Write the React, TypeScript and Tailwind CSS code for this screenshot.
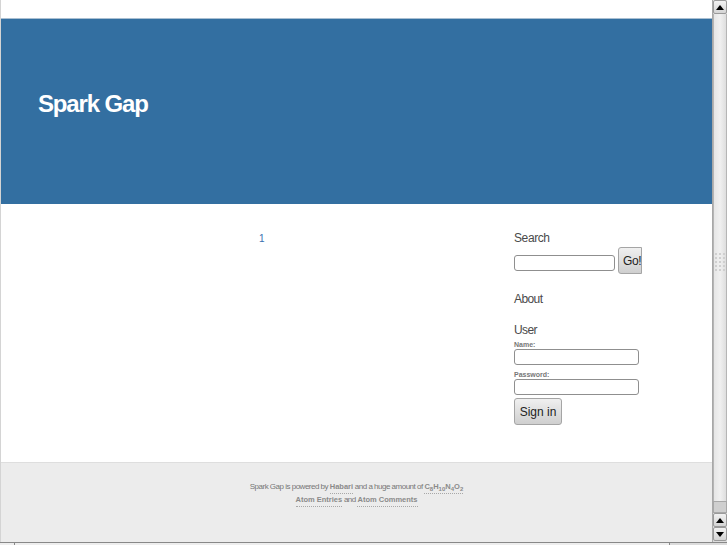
import React from "react";

const font = { fontFamily: '"Liberation Sans", Arial, sans-serif' };

const Field = () => (
  <input className="block w-[125px] h-[16px] bg-white border border-[#8f8f8f] rounded-[3px]" />
);

const ArrowButton = ({ up }: { up: boolean }) => (
  <div className="w-[14px] h-[14px] bg-gradient-to-b from-[#f2f2f2] to-[#d4d4d4] border border-[#9a9a9a] rounded-[2px] flex items-center justify-center">
    <div
      className={`w-0 h-0 border-l-[4px] border-r-[4px] border-l-transparent border-r-transparent ${
        up ? "border-b-[5px] border-b-black" : "border-t-[5px] border-t-black"
      }`}
    />
  </div>
);

const Scrollbar = () => (
  <div className="w-[15px] shrink-0 flex flex-col items-center bg-[#dcdcdc] border-l border-[#a8a8a8]">
    <ArrowButton up />
    <div className="flex-1 w-[14px] flex flex-col items-center justify-center pt-[8px] bg-gradient-to-r from-[#e6e6e6] via-[#f0f0f0] to-[#dedede] border-x border-[#b5b5b5]">
      <div className="grid grid-cols-3 gap-x-[2px] gap-y-[2px]">
        {Array.from({ length: 15 }).map((_, i) => (
          <div key={i} className="w-[2px] h-[2px] bg-[#cfcfcf]" />
        ))}
      </div>
    </div>
    <div className="h-[12px] w-[14px] bg-[#cfcfcf] border border-[#a8a8a8]" />
    <ArrowButton up />
    <ArrowButton up={false} />
    <div className="h-[1px]" />
  </div>
);

const FooterLink = ({ children }: { children: React.ReactNode }) => (
  <span className="font-bold text-[7.5px] text-[#8a8a8a] tracking-[0px] border-b border-dotted border-[#a8a8a8] pb-[2px]">
    {children}
  </span>
);

const Sub = ({ children }: { children: React.ReactNode }) => (
  <sub className="text-[6px]">{children}</sub>
);

export default function App() {
  return (
    <div className="w-[727px] h-[545px] overflow-hidden bg-white flex flex-col" style={font}>
      <div className="flex h-[542px]">
        <div className="w-[712px] flex flex-col border-l border-[#d4d4d4]">
          <div className="h-[18px] bg-white border-b border-[#a9bfd2] box-content" />
          <header className="h-[185px] bg-[#336fa1] pl-[37px] pt-[70px]">
            <h1 className="text-[24px] leading-[30px] font-bold text-white tracking-[-1.15px]">Spark Gap</h1>
          </header>
          <main className="h-[258px] flex bg-white">
            <div className="w-[513px] pl-[258px] pt-[29px]">
              <span className="text-[10px] leading-[12px] block text-[#3a6fb0]">1</span>
            </div>
            <aside className="flex-1 pt-[26px] text-[#4a4a4a]">
              <h3 className="text-[12px] leading-[16px] tracking-[-0.4px]">Search</h3>
              <div className="flex items-end mt-[1px]">
                <input className="w-[101px] h-[16px] mb-[3px] bg-white border border-[#8f8f8f] rounded-[3px]" />
                <button className="ml-[3px] w-[24px] h-[27px] overflow-hidden whitespace-nowrap pl-[4px] text-left bg-gradient-to-b from-[#f0f0f0] to-[#cfcfcf] border border-[#a5a5a5] rounded-l-[3px] text-[12px] tracking-[-0.4px] text-[#222]">
                  Go!
                </button>
              </div>
              <h3 className="text-[12px] leading-[16px] tracking-[-0.6px] mt-[17px]">About</h3>
              <h3 className="text-[12px] leading-[16px] tracking-[-0.6px] mt-[15px]">User</h3>
              <label className="block text-[7px] leading-[9px] font-bold text-[#777] mt-[2px]">Name:</label>
              <Field />
              <label className="block text-[7px] leading-[9px] font-bold text-[#777] mt-[5px]">Password:</label>
              <Field />
              <button className="block mt-[3px] w-[48px] h-[27px] bg-gradient-to-b from-[#f0f0f0] to-[#cfcfcf] border border-[#a5a5a5] rounded-[3px] text-[12px] tracking-[0px] text-[#222]">
                Sign in
              </button>
            </aside>
          </main>
          <footer className="flex-1 bg-[#ececec] border-t border-[#dedede] pt-[17px] text-center text-[8px] leading-[13px] text-[#777]">
            <p className="tracking-[-0.5px]">
              Spark Gap is powered by <FooterLink>Habari</FooterLink> and a huge amount of{" "}
              <FooterLink>
                C<Sub>8</Sub>H<Sub>10</Sub>N<Sub>4</Sub>O<Sub>2</Sub>
              </FooterLink>
            </p>
            <p className="tracking-[-0.5px]">
              <FooterLink>Atom Entries</FooterLink> and <FooterLink>Atom Comments</FooterLink>
            </p>
          </footer>
        </div>
        <Scrollbar />
      </div>
      <div className="h-[3px] flex bg-[#dcdcdc] border-t border-[#888]">
        <div className="w-[15px] border-r border-[#888] bg-[#eee]" />
        <div className="w-[655px] bg-[#eee] border-r border-[#888]" />
      </div>
    </div>
  );
}
